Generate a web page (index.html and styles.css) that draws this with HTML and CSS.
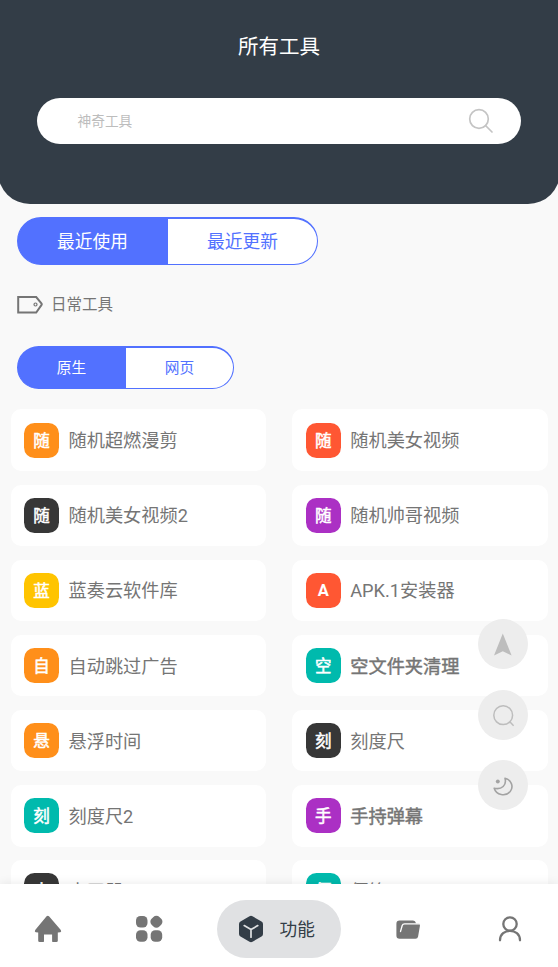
FILE: index.html
```html
<!DOCTYPE html>
<html lang="zh-CN">
<head>
<meta charset="utf-8">
<title>所有工具</title>
<link rel="stylesheet" href="styles.css">
</head>
<body>
<div class="app">
  <header class="header">
    <h1 class="title">所有工具</h1>
    <div class="search">
      <span class="hint">神奇工具</span>
      <svg class="search-icon" width="26" height="26" viewBox="0 0 26 26"><circle cx="11" cy="11" r="9.300"/><path d="M17.500 17.500l6.500 6.500"/></svg>
    </div>
  </header>

  <main class="content">
    <div class="segment segment-large">
      <span class="tab active">最近使用</span><span class="tab">最近更新</span>
    </div>
    <div class="category">
      <svg class="tag" width="26" height="20" viewBox="0 0 26 20"><path d="M1.200 2h18l5.200 6.400q.7.9 0 1.800L19.200 17.500h-18z"/><circle cx="18.500" cy="9.500" r="1.500"/></svg>
      <span>日常工具</span>
    </div>
    <div class="segment segment-small">
      <span class="tab active">原生</span><span class="tab">网页</span>
    </div>

    <div class="grid">
      <div class="card"><span class="badge orange">随</span><span class="name">随机超燃漫剪</span></div>
      <div class="card"><span class="badge red">随</span><span class="name">随机美女视频</span></div>
      <div class="card"><span class="badge dark">随</span><span class="name">随机美女视频2</span></div>
      <div class="card"><span class="badge purple">随</span><span class="name">随机帅哥视频</span></div>
      <div class="card"><span class="badge yellow">蓝</span><span class="name">蓝奏云软件库</span></div>
      <div class="card"><span class="badge red latin">A</span><span class="name">APK.1安装器</span></div>
      <div class="card"><span class="badge orange">自</span><span class="name">自动跳过广告</span></div>
      <div class="card"><span class="badge teal">空</span><span class="name strong">空文件夹清理</span></div>
      <div class="card"><span class="badge orange">悬</span><span class="name">悬浮时间</span></div>
      <div class="card"><span class="badge dark">刻</span><span class="name">刻度尺</span></div>
      <div class="card"><span class="badge teal">刻</span><span class="name">刻度尺2</span></div>
      <div class="card"><span class="badge purple">手</span><span class="name strong">手持弹幕</span></div>
      <div class="card"><span class="badge dark">水</span><span class="name">水平器</span></div>
      <div class="card"><span class="badge teal">便</span><span class="name">便签</span></div>
    </div>
  </main>

  <div class="floating">
    <span class="fab"><svg width="50" height="50" viewBox="0 0 50 50"><path class="arrow" d="M24.800 14.500l8.800 22-8.800-4.200-8.800 4.200z"/></svg></span>
    <span class="fab"><svg width="50" height="50" viewBox="0 0 50 50"><circle class="lens" cx="25.200" cy="25.200" r="9.400"/><path class="lens" d="M31.800 31.800l3.800 4"/></svg></span>
    <span class="fab"><svg width="50" height="50" viewBox="0 0 50 50"><path class="moon" d="M27 18.300c6.300 1.500 9 8.300 5.200 13.200-4.700 5.500-14 3.600-16-3.200 7.600 1.600 12.700-3 10.800-10z"/><path class="star" d="M19.800 19.500l1.400.6.6 1.400-.6 1.400-1.400.6-1.400-.6-.6-1.400.6-1.400z"/></svg></span>
  </div>

  <nav class="nav">
    <span class="nav-item"><svg width="28" height="28" viewBox="0 0 28 28"><path d="M12.600 1.300q1.200-1.200 2.400 0L26.800 15q1 1.700-.5 2.200l-2.500.3v8.300q0 1.300-1.500 1.300h-3.100q-1.100 0-1.100-1.200v-6.400H10v6.400q0 1.200-1.100 1.200H5.700q-1.500 0-1.500-1.300v-8.300l-2.500-.3Q.2 16.700 1.200 15z"/></svg></span>
    <span class="nav-item"><svg width="28" height="28" viewBox="0 0 28 28"><rect x="1" y="1" width="11.500" height="11.500" rx="4.500"/><rect x="15.900" y="1.300" width="11" height="11" rx="4.200" transform="rotate(45 21.400 6.800)"/><rect x="1" y="15.300" width="11.500" height="11.500" rx="4.500"/><rect x="15.700" y="15.300" width="11.500" height="11.500" rx="4.500"/></svg></span>
    <span class="nav-item selected"><svg width="28" height="28" viewBox="0 0 28 28"><path d="M12.500 1.300q1.500-.9 3 0l9 5.100q1.500.9 1.500 2.600v10q0 1.700-1.500 2.600l-9 5.100q-1.500.9-3 0l-9-5.100Q2 20.700 2 19V9q0-1.700 1.500-2.600z"/><path class="cube-line" d="M7.200 10.600l6.800 4 6.800-4M14 14.600v7.600"/></svg><span class="label">功能</span></span>
    <span class="nav-item"><svg width="28" height="28" viewBox="0 0 28 28"><path d="M5.600 5.500h13.200q2.600 0 3.200 3.100h3.300q.9.900.6 2.400l-1.800 10.500q-.4 2.300-2.600 2.300H5.600q-3.200 0-3.200-3.200V8.700q0-3.200 3.200-3.200z"/><path class="fold-line" d="M6.500 16.500l1.700-6q.6-1.600 2.400-1.600h15"/></svg></span>
    <span class="nav-item"><svg width="28" height="28" viewBox="0 0 28 28"><circle class="person" cx="14" cy="9" r="6.700"/><path class="person" d="M4 25.300c0-12.700 20-12.700 20 0"/></svg></span>
  </nav>
</div>
</body>
</html>
```
FILE: styles.css
```css
* { box-sizing: border-box; }

body {
  margin: 0;
  background: #f9f9f9;
  color: #757575;
  font-family: Roboto, "Noto Sans CJK SC", sans-serif;
}

.app {
  position: relative;
  display: flex;
  flex-direction: column;
  height: 967px;
  overflow: hidden;
}

svg { display: block; flex: none; }

.header {
  flex: none;
  height: 204px;
  margin: 0 -2px;
  padding: 30.500px 39px 0;
  border-radius: 0 0 32px 32px;
  background: #333d47;
}

.title {
  margin: 0 0 35.500px;
  color: #fff;
  font-size: 20.500px;
  font-weight: 400;
  line-height: 32px;
  text-align: center;
}

.search {
  display: flex;
  align-items: center;
  justify-content: space-between;
  height: 46px;
  padding: 0 27px 0 40.500px;
  border-radius: 23px;
  background: #fff;
}

.hint { padding-bottom: 2px; color: #bdbdbd; font-size: 13.700px; }
.search-icon { fill: none; stroke: #c4c4c4; stroke-width: 1.700; stroke-linecap: round; }

.content {
  flex: 1;
  min-height: 0;
  padding-top: 13px;
  overflow: hidden;
}

.segment {
  display: flex;
  margin-left: 17px;
  border: solid #5271ff;
  border-width: 2px 1.500px 1.500px 1.500px;
  border-radius: 24px;
  background: linear-gradient(to right, #5271ff 50.300%, #fff 50.300%) border-box;
  color: #5271ff;
}

.segment-large { width: 301px; height: 48px; font-size: 17.700px; }
.segment-small { width: 217px; height: 43px; font-size: 14.700px; }

.tab {
  flex: 1;
  display: flex;
  align-items: center;
  justify-content: center;
  padding-bottom: 3px;
}

.active { padding-right: 1px; color: #fff; }

.category {
  display: flex;
  align-items: center;
  gap: 8px;
  height: 40px;
  margin: 20px 0 21px 17px;
  font-size: 15.500px;
  line-height: 40px;
}

.tag { fill: none; stroke: #757575; stroke-width: 2; }
.tag circle { stroke-width: 1.200; }

.grid {
  display: grid;
  grid-template-columns: 1fr 1fr;
  grid-auto-rows: 61.500px;
  gap: 13.650px 26px;
  padding: 20.400px 10px 0 10.500px;
}

.card {
  display: flex;
  align-items: center;
  gap: 9.500px;
  padding-left: 13.500px;
  border-radius: 10px;
  background: #fff;
  font-size: 18.200px;
}

.name { padding-bottom: 2px; }

.badge {
  display: flex;
  align-items: center;
  justify-content: center;
  width: 35px;
  height: 35px;
  padding-bottom: 1px;
  border-radius: 10.500px;
  color: #fff;
  font-size: 16.500px;
  -webkit-text-stroke: .5px #fff;
}

.latin {
  padding: 1px 0 0;
  font-weight: 700;
  -webkit-text-stroke: 0;
}

.strong { -webkit-text-stroke: .45px #757575; }
.orange { background: #ff8f1a; }
.red { background: #ff5733; }
.dark { background: #373737; }
.purple { background: #ab30c4; }
.yellow { background: #ffc400; }
.teal { background: #00baad; }

.floating {
  position: absolute;
  top: 619px;
  right: 30.500px;
  display: flex;
  flex-direction: column;
  gap: 20.500px;
}

.fab { border-radius: 50%; background: #ededed; }
.arrow { fill: #bdbdbd; }
.lens { fill: none; stroke: #bdbdbd; stroke-width: 1.500; }
.moon { fill: none; stroke: #a3a3a3; stroke-width: 1.600; stroke-linejoin: round; }
.star { fill: #a3a3a3; }

.nav {
  position: relative;
  flex: none;
  display: flex;
  align-items: flex-start;
  gap: 53.500px;
  height: 83px;
  padding: 16px 34px 0 33.500px;
  background: #fff;
  box-shadow: 0 0 10px rgba(0, 0, 0, .09);
}

.nav-item {
  display: flex;
  align-items: center;
  height: 58px;
  fill: #757575;
}

.nav-item:first-child { margin-right: 20px; }
.nav-item:last-child { margin-left: 20.500px; }

.selected {
  gap: 15px;
  width: 124px;
  padding-left: 20px;
  border-radius: 29px;
  background: #e0e1e3;
  color: #333d47;
  fill: #333d47;
  font-size: 17.700px;
}

.label { padding-bottom: 2px; }
.cube-line { fill: none; stroke: #e0e1e3; stroke-width: 1.700; stroke-linecap: round; }
.fold-line { fill: none; stroke: #fff; stroke-width: 1.300; stroke-linecap: round; }
.person { fill: none; stroke: #757575; stroke-width: 2.300; stroke-linecap: round; }
```
